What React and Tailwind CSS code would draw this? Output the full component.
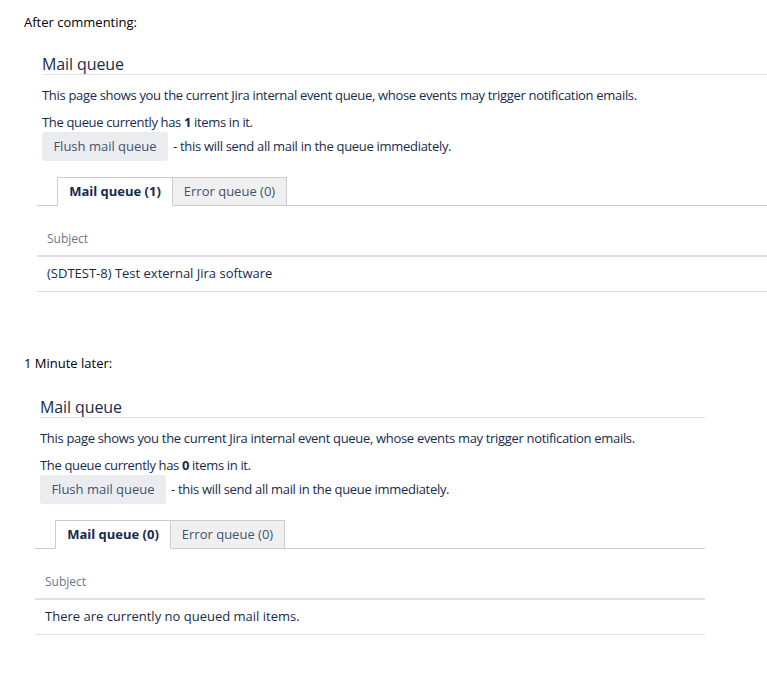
import React from "react";

const font = { fontFamily: '"Open Sans", "Noto Sans", sans-serif' };

function MailQueue({ count, rowText, widthClass, leftClass }) {
  return (
    <div className={`${leftClass} ${widthClass}`}>
      <h2 className="h-[21px] border-b border-[#dfe1e6] text-[16px] leading-[20px] tracking-[-0.1px] font-normal text-[#172b4d]">
        Mail queue
      </h2>
      <p className="mt-[10px] text-[13px] leading-[20px] tracking-[-0.32px] text-[#172b4d]">
        This page shows you the current Jira internal event queue, whose events may trigger notification emails.
      </p>
      <p className="mt-[7px] text-[13px] leading-[20px] tracking-[-0.35px] text-[#172b4d]">
        The queue currently has <b className="font-bold">{count}</b> items in it.
      </p>
      <div className="flex items-center">
        <button className="h-[29px] w-[126px] rounded-[3px] bg-[#ebecf0] text-[13px] text-[#42526e]">
          Flush mail queue
        </button>
        <span className="ml-[5px] text-[13px] tracking-[-0.3px] text-[#172b4d]">
          - this will send all mail in the queue immediately.
        </span>
      </div>
      <div className="-ml-[5px] mt-[16px]">
        <div className="flex border-b border-[#cccccc] pl-[20px]">
          <div className="-mb-px flex h-[29px] w-[116px] items-center justify-center border border-b-white border-[#cccccc] bg-white pt-px text-[13px] font-bold text-[#172b4d]">
            Mail queue ({count})
          </div>
          <div className="flex h-[28px] w-[114px] items-center justify-center border border-l-0 border-b-0 border-[#cccccc] bg-[#f0f0f0] pt-px text-[13px] text-[#42526e]">
            Error queue (0)
          </div>
        </div>
        <div className="h-[51px] border-b-2 border-[#dfe1e6] pl-[10px] pt-[23px] text-[12px] leading-[20px] text-[#6b778c]">
          Subject
        </div>
        <div className="h-[35px] border-b border-[#dfe1e6] pl-[10px] pt-[6px] text-[13px] leading-[20px] text-[#172b4d]">
          {rowText}
        </div>
      </div>
    </div>
  );
}

export default function App() {
  return (
    <div className="h-[675px] w-[767px] overflow-hidden bg-white" style={font}>
      <div className="pl-[24px] pt-[12px] text-[13px] leading-[20px] text-black">After commenting:</div>
      <div className="mt-[22px]">
        <MailQueue
          count={1}
          rowText="(SDTEST-8) Test external Jira software"
          leftClass="ml-[42px]"
          widthClass="w-[760px]"
        />
      </div>
      <div className="mt-[61px] pl-[24px] text-[13px] leading-[20px] text-black">1 Minute later:</div>
      <div className="mt-[24px]">
        <MailQueue
          count={0}
          rowText="There are currently no queued mail items."
          leftClass="ml-[40px]"
          widthClass="w-[665px]"
        />
      </div>
    </div>
  );
}
